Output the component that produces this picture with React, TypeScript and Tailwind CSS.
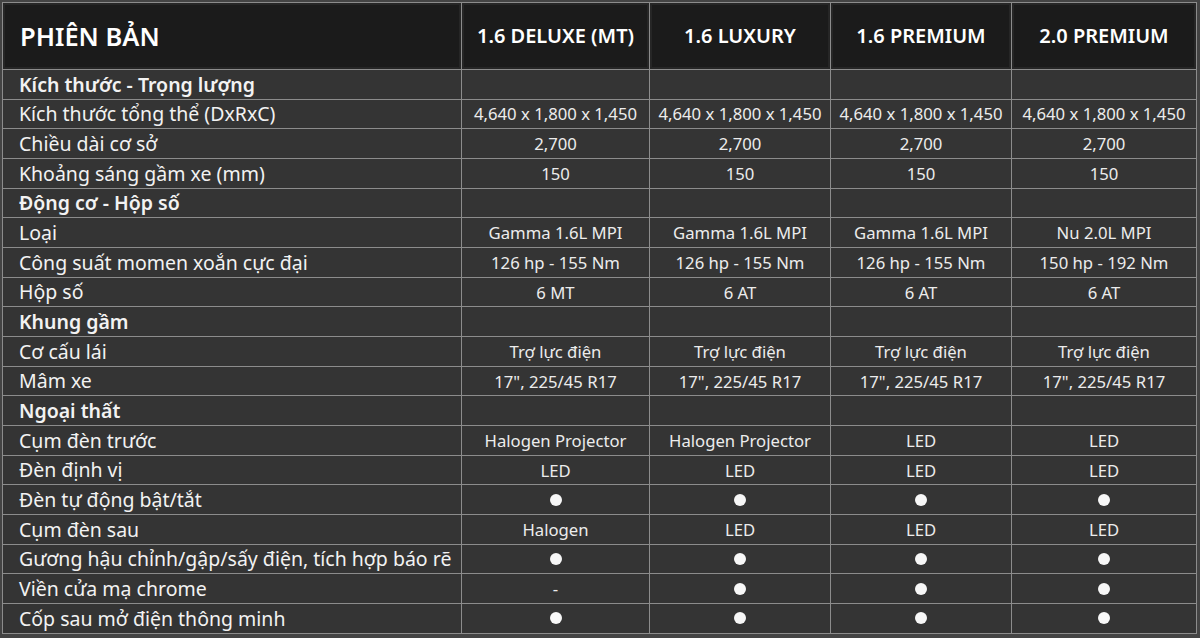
const headers = ["1.6 DELUXE (MT)", "1.6 LUXURY", "1.6 PREMIUM", "2.0 PREMIUM"];

type Row = { label: string; section?: boolean; values?: string[] };

const DOT = "●";

const rows: Row[] = [
  { label: "Kích thước - Trọng lượng", section: true },
  {
    label: "Kích thước tổng thể (DxRxC)",
    values: ["4,640 x 1,800 x 1,450", "4,640 x 1,800 x 1,450", "4,640 x 1,800 x 1,450", "4,640 x 1,800 x 1,450"],
  },
  { label: "Chiều dài cơ sở", values: ["2,700", "2,700", "2,700", "2,700"] },
  { label: "Khoảng sáng gầm xe (mm)", values: ["150", "150", "150", "150"] },
  { label: "Động cơ - Hộp số", section: true },
  { label: "Loại", values: ["Gamma 1.6L MPI", "Gamma 1.6L MPI", "Gamma 1.6L MPI", "Nu 2.0L MPI"] },
  {
    label: "Công suất momen xoắn cực đại",
    values: ["126 hp - 155 Nm", "126 hp - 155 Nm", "126 hp - 155 Nm", "150 hp - 192 Nm"],
  },
  { label: "Hộp số", values: ["6 MT", "6 AT", "6 AT", "6 AT"] },
  { label: "Khung gầm", section: true },
  { label: "Cơ cấu lái", values: ["Trợ lực điện", "Trợ lực điện", "Trợ lực điện", "Trợ lực điện"] },
  { label: "Mâm xe", values: ['17", 225/45 R17', '17", 225/45 R17', '17", 225/45 R17', '17", 225/45 R17'] },
  { label: "Ngoại thất", section: true },
  { label: "Cụm đèn trước", values: ["Halogen Projector", "Halogen Projector", "LED", "LED"] },
  { label: "Đèn định vị", values: ["LED", "LED", "LED", "LED"] },
  { label: "Đèn tự động bật/tắt", values: [DOT, DOT, DOT, DOT] },
  { label: "Cụm đèn sau", values: ["Halogen", "LED", "LED", "LED"] },
  { label: "Gương hậu chỉnh/gập/sấy điện, tích hợp báo rẽ", values: [DOT, DOT, DOT, DOT] },
  { label: "Viền cửa mạ chrome", values: ["-", DOT, DOT, DOT] },
  { label: "Cốp sau mở điện thông minh", values: [DOT, DOT, DOT, DOT] },
];

function Cell({ value }: { value: string }) {
  if (value === DOT) {
    return (
      <div className="flex items-center justify-center bg-[#343434] h-[28.68px]">
        <span className="block w-[12px] h-[12px] rounded-full bg-[#f7f7f7]" />
      </div>
    );
  }
  return (
    <div className="flex items-center justify-center bg-[#343434] h-[28.68px] text-[16.7px] text-[#ececec] whitespace-nowrap">
      {value}
    </div>
  );
}

export default function App() {
  return (
    <div
      className="w-[1200px] h-[638px] bg-[#444444] pt-[2px] pl-[2px] overflow-hidden"
      style={{ fontFamily: '"Noto Sans", "Open Sans", sans-serif' }}
    >
      <div className="w-[1195px] grid grid-cols-[458px_187px_180px_180px_184px] gap-px p-px bg-[#8c8c8c]">
        {/* Header row */}
        <div className="h-[66px] bg-[#1b1b1b] border-2 border-[#262626] flex items-center pl-[15px] text-[25.5px] font-semibold text-white">
          PHIÊN BẢN
        </div>
        {headers.map((h) => (
          <div
            key={h}
            className="h-[66px] bg-[#1b1b1b] border-2 border-[#262626] flex items-center justify-center text-[20px] font-semibold text-white whitespace-nowrap"
          >
            {h}
          </div>
        ))}

        {/* Body rows */}
        {rows.map((r) => (
          <div key={r.label} className="contents">
            <div
              className={`h-[28.68px] bg-[#343434] flex items-center pl-[16px] text-[19.5px] text-[#f2f2f2] whitespace-nowrap ${
                r.section ? "font-semibold" : ""
              }`}
            >
              {r.label}
            </div>
            {(r.values ?? ["", "", "", ""]).map((v, i) => (
              <Cell key={i} value={v} />
            ))}
          </div>
        ))}
      </div>
    </div>
  );
}
